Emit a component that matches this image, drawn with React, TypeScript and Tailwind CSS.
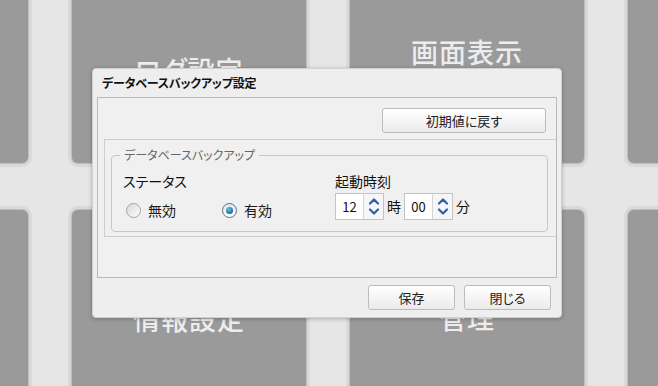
import React from 'react'

const jp = "[font-family:'Noto_Sans_CJK_JP','Noto_Sans',sans-serif] [font-feature-settings:'palt']"

function Tile({ label, pad, rounded }: { label?: string; pad: string; rounded: string }) {
  return (
    <div
      className={`bg-[#9a9a9a] ${rounded} shadow-[0_0_0_1px_#bdbdbd,0_0_0_4px_#d9d9d9] flex justify-center ${pad}`}
    >
      {label && (
        <span className="text-[27px] leading-[34px] font-medium text-[#ededed] tracking-[1px]">{label}</span>
      )}
    </div>
  )
}

function Chevron({ up }: { up?: boolean }) {
  return (
    <svg width="12" height="8" viewBox="0 0 12 8">
      <path
        d={up ? 'M2 6.5 L6 2.5 L10 6.5' : 'M2 1.5 L6 5.5 L10 1.5'}
        fill="none"
        stroke="#2f5f9f"
        strokeWidth="2.2"
        strokeLinecap="round"
        strokeLinejoin="round"
      />
    </svg>
  )
}

function Spinner({ value }: { value: string }) {
  return (
    <div className="flex h-[27px] border border-[#c3c3c3] bg-white">
      <div className="w-[27px] flex items-center justify-center text-[13px] text-[#111]">{value}</div>
      <div className="w-[20px] flex flex-col items-center justify-center gap-[3px] border-l border-[#d6d6d6] bg-[#f4f6f9]">
        <Chevron up />
        <Chevron />
      </div>
    </div>
  )
}

function Radio({ checked, label }: { checked?: boolean; label: string }) {
  return (
    <div className="flex items-center gap-[7px]">
      <div
        className={`w-[15px] h-[15px] rounded-full border flex items-center justify-center ${
          checked
            ? 'border-[#5b6f80] bg-gradient-to-b from-[#dfe7ee] to-[#ffffff]'
            : 'border-[#a3a3a3] bg-gradient-to-br from-[#d8d8d8] to-[#ffffff]'
        }`}
      >
        {checked && (
          <div className="w-[7px] h-[7px] rounded-full bg-[radial-gradient(circle_at_40%_35%,#6fc0e6,#1d6a95_70%)]" />
        )}
      </div>
      <span className="text-[14px] text-[#1a1a1a]">{label}</span>
    </div>
  )
}

function Button({ children, w }: { children: React.ReactNode; w: string }) {
  return (
    <div
      className={`${w} h-[25px] rounded-[3px] border border-[#bcbcbc] bg-gradient-to-b from-[#ffffff] to-[#ebebeb] flex items-center justify-center text-[13px] text-[#222]`}
    >
      {children}
    </div>
  )
}

export default function App() {
  return (
    <div className={`relative w-[658px] h-[386px] overflow-hidden bg-[#e6e6e6] ${jp}`}>
      {/* background tile grid */}
      <div className="-ml-[206px] -mt-[100px] grid grid-cols-[234px_234px_234px_234px] grid-rows-[263px_263px] gap-x-[44px] gap-y-[47px]">
        <Tile rounded="rounded-[6px]" pad="" />
        <Tile label="ログ設定" rounded="rounded-[6px]" pad="pt-[153px]" />
        <Tile label="画面表示" rounded="rounded-[6px]" pad="pt-[135px]" />
        <Tile rounded="rounded-[6px]" pad="" />
        <Tile rounded="rounded-[6px]" pad="" />
        <Tile label="情報設定" rounded="rounded-[6px]" pad="pt-[92px]" />
        <Tile label="管理" rounded="rounded-[6px]" pad="pt-[91px]" />
        <Tile rounded="rounded-[6px]" pad="" />
      </div>

      {/* dialog */}
      <div className="absolute left-[92px] top-[68px] w-[470px] h-[250px] rounded-[4px] bg-[#eeeeee] border border-[#d0d0d0] shadow-[0_1px_4px_rgba(0,0,0,0.25)] flex flex-col">
        <div className="h-[28px] pl-[9px] flex items-center text-[12px] font-bold text-[#111] tracking-[-0.2px]">
          データベースバックアップ設定
        </div>
        <div className="mx-[4px] h-[181px] border border-[#bababa] bg-[#f0f0f0] flex flex-col">
          <div className="flex justify-end pt-[10px] pr-[10px]">
            <Button w="w-[164px]">初期値に戻す</Button>
          </div>
          <div className="ml-[6px] mt-[6px] h-[98px] border-l border-t border-b border-[#cdcdcd] pl-[6px] pr-[8px] pt-[15px]">
            <div className="relative h-[77px] rounded-[4px] border border-[#c8c8c8] pl-[11px] pt-[15px] flex">
              <div className="absolute -top-[10px] left-[8px] px-[4px] bg-[#f0f0f0] text-[12px] leading-[18px] text-[#666]">
                データベースバックアップ
              </div>
              <div className="w-[212px] flex flex-col">
                <div className="text-[14px] leading-[20px] text-[#111]">ステータス</div>
                <div className="mt-[9px] flex items-center gap-[46px] pl-[3px]">
                  <Radio label="無効" />
                  <Radio checked label="有効" />
                </div>
              </div>
              <div className="flex flex-col">
                <div className="text-[14px] leading-[20px] text-[#111]">起動時刻</div>
                <div className="mt-[2px] flex items-center gap-[3px] text-[14px] text-[#111]">
                  <Spinner value="12" />
                  <span>時</span>
                  <Spinner value="00" />
                  <span>分</span>
                </div>
              </div>
            </div>
          </div>
        </div>
        <div className="flex justify-end gap-[9px] pt-[7px] pr-[10px]">
          <Button w="w-[87px]">保存</Button>
          <Button w="w-[87px]">閉じる</Button>
        </div>
      </div>
    </div>
  )
}
